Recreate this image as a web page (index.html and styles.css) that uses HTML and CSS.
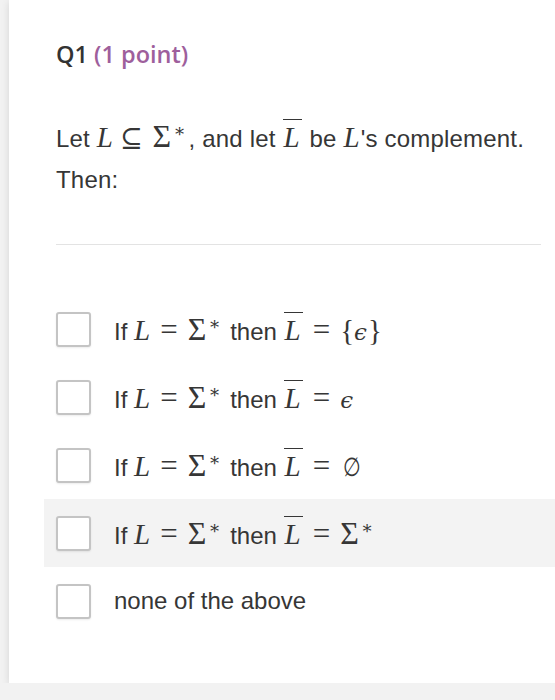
FILE: index.html
```html
<!DOCTYPE html>
<html>
<head>
<meta charset="utf-8">
<link rel="stylesheet" href="styles.css">
</head>
<body>
<div class="card">
  <h2 class="qtitle">Q1 <span class="points">(1 point)</span></h2>
  <p class="prompt">Let <span class="m"><i>L</i><span class="rel sub">⊆</span><span class="sig">Σ</span><sup>∗</sup></span>, and let <span class="m"><i class="bar">L</i></span> be <span class="m"><i>L</i></span>'s complement.<br>Then:</p>
  <hr class="divider">
  <ul class="options">
    <li class="opt"><span class="box"></span><span class="label">If <span class="m"><i>L</i><span class="rel">=</span><span class="sig">Σ</span><sup>∗</sup></span> then <span class="m"><i class="bar">L</i><span class="rel">=</span>{<i class="eps">ϵ</i>}</span></span></li>
    <li class="opt"><span class="box"></span><span class="label">If <span class="m"><i>L</i><span class="rel">=</span><span class="sig">Σ</span><sup>∗</sup></span> then <span class="m"><i class="bar">L</i><span class="rel">=</span><i class="eps">ϵ</i></span></span></li>
    <li class="opt"><span class="box"></span><span class="label">If <span class="m"><i>L</i><span class="rel">=</span><span class="sig">Σ</span><sup>∗</sup></span> then <span class="m"><i class="bar">L</i><span class="rel">=</span><span class="empty">∅</span></span></span></li>
    <li class="opt hover"><span class="box"></span><span class="label">If <span class="m"><i>L</i><span class="rel">=</span><span class="sig">Σ</span><sup>∗</sup></span> then <span class="m"><i class="bar">L</i><span class="rel">=</span><span class="sig">Σ</span><sup>∗</sup></span></span></li>
    <li class="opt"><span class="box"></span><span class="label">none of the above</span></li>
  </ul>
</div>
</body>
</html>
```
FILE: styles.css
```css
html, body {
  margin: 0;
  padding: 0;
}
body {
  background: #f2f2f2;
  overflow: hidden;
  font-family: "Liberation Sans", Arial, sans-serif;
  color: #363636;
}
.card {
  background: #ffffff;
  margin-left: 9px;
  width: 580px;
  height: 683px;
  box-sizing: border-box;
  padding: 40px 0 0 47px;
  box-shadow: 0 2px 8px rgba(0,0,0,0.12);
}
.qtitle {
  margin: 0;
  font-family: "Open Sans", sans-serif;
  font-weight: 600;
  font-size: 23.5px;
  line-height: 28px;
  color: #333333;
}
.points {
  color: #9e5f9c;
}
.prompt {
  margin: 50px 0 0 0;
  font-size: 24px;
  line-height: 41px;
  width: 510px;
  letter-spacing: 0.2px;
}
.m {
  font-family: "Liberation Serif", "DejaVu Serif", serif;
  font-size: 29px;
  line-height: 1;
  white-space: nowrap;
  letter-spacing: 0;
}
.m i {
  font-style: italic;
  margin-right: 1px;
}
.m sup {
  font-size: 18px;
  line-height: 0;
  vertical-align: 10px;
  margin: 0 3px 0 2px;
}
.sig {
  font-size: 32px;
  line-height: 1;
}
.rel {
  font-size: 31px;
  margin: 0 10px 0 9px;
}
.rel.sub {
  font-family: "DejaVu Serif", serif;
  font-size: 27px;
  margin: 0 10px 0 6px;
}
.bar {
  display: inline-block;
  border-top: 1.5px solid #363636;
  line-height: 22px;
  padding: 6px 2px 0 1px;
}
.eps {
  font-family: "DejaVu Serif", serif;
  font-size: 23px;
}
.empty {
  display: inline-block;
  font-family: "DejaVu Serif", serif;
  font-size: 26px;
  transform: scaleX(0.78);
}
.divider {
  border: 0;
  border-top: 1px solid #e3e3e3;
  margin: 44px 0 0 0;
  width: 485px;
}
.options {
  list-style: none;
  margin: 50px 0 0 -12px;
  padding: 0;
}
.opt {
  display: flex;
  align-items: center;
  height: 68px;
  padding-left: 12px;
  font-size: 24px;
}
.opt.hover {
  background: #f3f3f3;
}
.box {
  width: 31px;
  height: 31px;
  border: 2px solid #c4c4c4;
  border-radius: 3px;
  background: #ffffff;
  box-shadow: 0 1px 2px rgba(0,0,0,0.08);
  flex: none;
  margin-right: 23px;
}
.label {
  white-space: nowrap;
}
```
